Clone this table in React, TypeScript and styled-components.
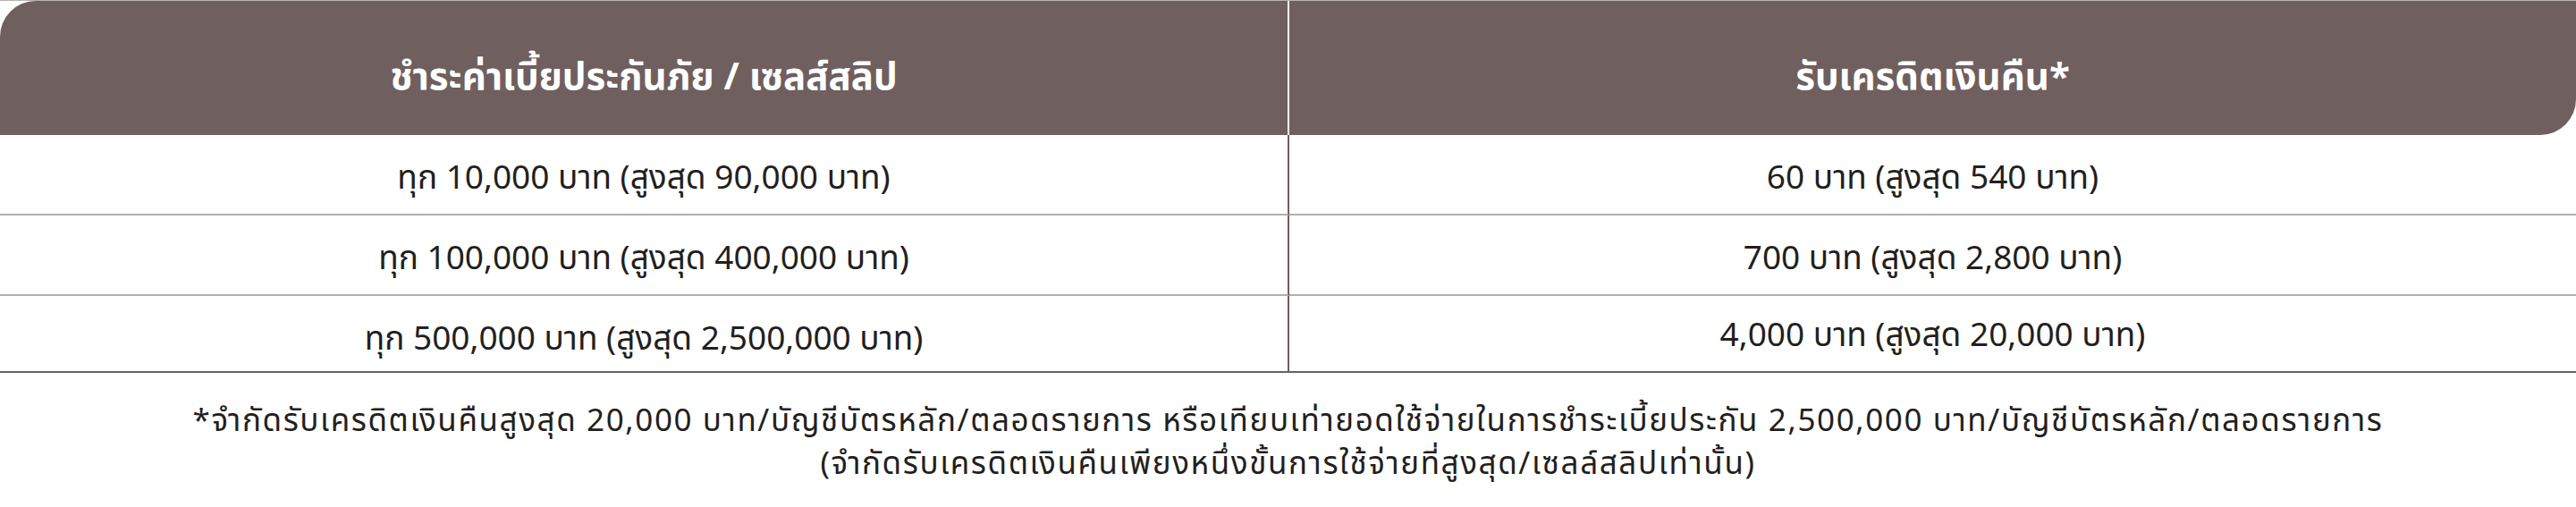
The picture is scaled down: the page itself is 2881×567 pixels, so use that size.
import React from 'react';
import styled, { createGlobalStyle } from 'styled-components';

const GlobalStyle = createGlobalStyle`
  html, body {
    margin: 0;
    padding: 0;
    background: #ffffff;
  }
  body {
    font-family: "Noto Sans Thai", "Noto Sans", "Noto Sans CJK SC", sans-serif;
    color: #231f20;
  }
`;

const rows = [
  { spend: 'ทุก 10,000 บาท (สูงสุด 90,000 บาท)', credit: '60 บาท (สูงสุด 540 บาท)' },
  { spend: 'ทุก 100,000 บาท (สูงสุด 400,000 บาท)', credit: '700 บาท (สูงสุด 2,800 บาท)' },
  { spend: 'ทุก 500,000 บาท (สูงสุด 2,500,000 บาท)', credit: '4,000 บาท (สูงสุด 20,000 บาท)' },
];

const App: React.FC = () => {
  return (
    <Page>
      <GlobalStyle />
      <TopRule />
      <Table>
        <HeadCell $side="left">ชำระค่าเบี้ยประกันภัย / เซลส์สลิป</HeadCell>
        <HeadCell $side="right">รับเครดิตเงินคืน*</HeadCell>
        {rows.map((row, i) => (
          <React.Fragment key={i}>
            <BodyCell $divider $last={i === rows.length - 1}>{row.spend}</BodyCell>
            <BodyCell $last={i === rows.length - 1}>{row.credit}</BodyCell>
          </React.Fragment>
        ))}
      </Table>
      <Footnote>
        <p>*จำกัดรับเครดิตเงินคืนสูงสุด 20,000 บาท/บัญชีบัตรหลัก/ตลอดรายการ หรือเทียบเท่ายอดใช้จ่ายในการชำระเบี้ยประกัน 2,500,000 บาท/บัญชีบัตรหลัก/ตลอดรายการ</p>
        <p>(จำกัดรับเครดิตเงินคืนเพียงหนึ่งขั้นการใช้จ่ายที่สูงสุด/เซลล์สลิปเท่านั้น)</p>
      </Footnote>
    </Page>
  );
};

const Page = styled.div`
  width: 2881px;
  display: flex;
  flex-direction: column;
`;

const TopRule = styled.div`
  height: 1px;
  background: #b9b2b1;
`;

const Table = styled.div`
  display: grid;
  grid-template-columns: 1442px 1fr;
  grid-template-rows: 150px 90px 90px 84px;
  border-bottom: 2px solid #6f5f5f;
`;

const HeadCell = styled.div<{ $side: 'left' | 'right' }>`
  display: flex;
  align-items: center;
  justify-content: center;
  padding-top: 22px;
  box-sizing: border-box;
  background: #6f5f5e;
  color: #ffffff;
  font-size: 42px;
  font-weight: 700;
  border-right: ${p => (p.$side === 'left' ? '2px solid #ffffff' : 'none')};
  border-radius: ${p => (p.$side === 'left' ? '40px 0 0 0' : '0 0 40px 0')};
`;

const BodyCell = styled.div<{ $divider?: boolean; $last?: boolean }>`
  display: flex;
  align-items: center;
  justify-content: center;
  box-sizing: border-box;
  padding-top: ${p => (p.$last ? (p.$divider ? '14px' : '6px') : '9px')};
  font-size: 37px;
  color: #231f20;
  border-right: ${p => (p.$divider ? '2px solid #6f5f5f' : 'none')};
  border-bottom: ${p => (p.$last ? 'none' : '2px solid #b5aeac')};
`;

const Footnote = styled.div`
  padding-top: 31px;
  text-align: center;
  font-size: 35px;
  letter-spacing: 1.6px;
  line-height: 48px;
  color: #231f20;

  p {
    margin: 0;
  }
`;

export default App;
